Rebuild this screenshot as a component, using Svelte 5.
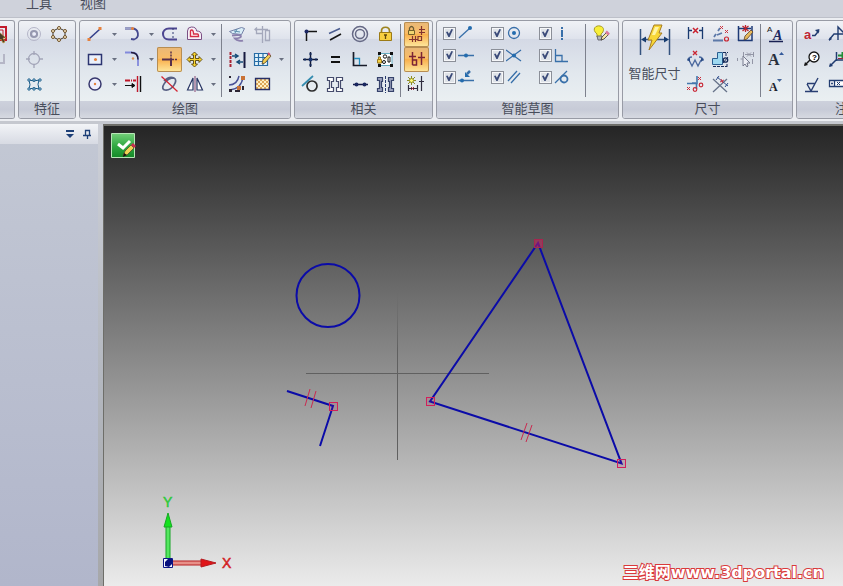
<script>
  // Sketch environment: command ribbon, docking pane and the drawing view.

  // Icon bodies, all on a 25x25 grid.
  const icons = {
    select: '<path d="M5 5H24V18H5Z" fill="none" stroke="#c11a2b" stroke-width="2"/><path d="M8 8H21V15H8Z" fill="none" stroke="#c11a2b"/><path d="M16 9v11l3-3 2 4 2-1-2-4h3z" fill="#463a26" stroke="#c9a43c" stroke-width=".6"/>',
    frame: '<path d="M8 8v8h14V7" fill="none" stroke="#b5b6c6" stroke-width="2"/>',
    ring: '<g fill="none"><circle cx="12" cy="12" r="6.500" stroke="#b4b5c8"/><circle cx="12" cy="12" r="3" stroke="#9698b0" stroke-width="2.200"/></g><circle cx="12.500" cy="12" r="1.300" fill="#eef"/>',
    hex: '<path d="M12 6l6 3v6l-6 3-6-3V9z" fill="none" stroke="#3c3328"/><g fill="#fff0cb" stroke="#6e5129"><circle cx="12" cy="6" r="1.500"/><circle cx="18" cy="9" r="1.500"/><circle cx="18" cy="15" r="1.500"/><circle cx="12" cy="18" r="1.500"/><circle cx="6" cy="15" r="1.500"/><circle cx="6" cy="9" r="1.500"/></g>',
    target: '<g fill="none" stroke="#a3a5b8" stroke-width="1.300"><circle cx="12" cy="12" r="5.500"/><path d="M4 12h4M17 12h4M12 4v4M12 17v4"/></g>',
    pattern: '<path d="M7 8q5 2 10 0q-2 4 0 9q-5-2-10 0q2-4 0-9M12 8v2M12 15v2" fill="none" stroke="#175a87"/><g fill="#d8efff" stroke="#175a87"><circle cx="7" cy="8" r="1.200"/><circle cx="12" cy="8" r="1.200"/><circle cx="18" cy="8" r="1.200"/><circle cx="7" cy="17" r="1.200"/><circle cx="12" cy="17" r="1.200"/><circle cx="18" cy="17" r="1.200"/></g>',
    line: '<path d="M6 17L17 7" stroke="#333e8a" stroke-width="1.600"/><path d="M4.500 16h3v3h-3zM15.500 5h3v3h-3z" fill="#e5813d"/>',
    rect: '<path d="M5.500 7.500h13v10h-13z" fill="#eaf0fb" stroke="#2c3470" stroke-width="1.500"/><circle cx="12.500" cy="12.500" r="1.500" fill="#e5813d"/>',
    circle: '<circle cx="12" cy="12" r="6" fill="#eef" stroke="#38386e" stroke-width="1.500"/><circle cx="12" cy="12" r="1.200" fill="#e5813d"/>',
    arc: '<path d="M5 6.500h7c7 0 8 9 2 11l-3-.500" fill="none" stroke="#45498f" stroke-width="1.800"/><path d="M5 6.500h7" stroke="#9ba1ca"/><circle cx="12.500" cy="6.500" r="1.500" fill="#e5813d"/>',
    fillet: '<path d="M5 5.500h7q6 0 6 7V19" fill="none" stroke="#8289dc" stroke-width="1.800"/><path d="M11 5.500q7 0 7 7" fill="none" stroke="#231d39" stroke-width="1.500"/><circle cx="13" cy="11.500" r="1.200" fill="#dc8d52"/>',
    trim: '<path d="M5 8.500h11" stroke="#c01628" stroke-width="2" stroke-dasharray="5 1 1 1"/><path d="M5 13.500h9M12 11.500l3 2-3 2z" stroke="#111"/><path d="M17.500 4v16" stroke="#c01628" stroke-width="1.400"/><path d="M20.500 4v16" stroke="#111" stroke-width="1.400"/>',
    slot: '<path d="M20 6.500h-8C4 6.500 4 17.500 12 17.500h8" fill="none" stroke="#4d4691" stroke-width="2"/><path d="M16 6v11" stroke="#333a73" stroke-dasharray="2 2"/>',
    cross: '<path d="M5 12.500h9V19" fill="none" stroke="#57304b" stroke-width="2"/><path d="M14 4.500v8h7" fill="none" stroke="#57304b" stroke-width="1.500" stroke-dasharray="2 1"/>',
    ellipse: '<path d="M8 18c-6-1 1-12 9-12 5 2-2 13-9 12M7 9q5-5 10-3" fill="none" stroke="#596184" stroke-width="1.700"/><path d="M4.500 4.500l16 15" stroke="#d42330" stroke-width="1.200"/>',
    offset: '<path d="M5.500 17.500V9q0-4 4-4 5 0 5 4 5 0 5 4v4.500z" fill="#f7f0f8" stroke="#7b4f84"/><path d="M8.500 14.500V9q0-1 1-1 2 0 2 4h4q1 0 1 2.500z" fill="#fff" stroke="#d52c46" stroke-width="1.400"/>',
    move: '<path d="M12.500 5l3 3h-2v3.500H17v-2l3 3-3 3v-2h-3.500V17h2l-3 3-3-3h2v-3.500H8v2l-3-3 3-3v2h3.500V8h-2z" fill="#f9d52e" stroke="#57430c" stroke-width=".9"/>',
    mirror: '<path d="M11 6v12H5.500zM15 6v12h5.500z" fill="#fff" stroke="#293664" stroke-width="1.200"/><path d="M13 4v16" stroke="#874573"/>',
    sheet: '<path d="M4.500 9.500l12-4 3 1-3 6-9-1z" fill="#d9edf7" stroke="#7482a8"/><path d="M9 9l6 1M12 7l-2 4" stroke="#5d8fae"/><path d="M7 13.500c12-2 11 3 3 3 2 2 6 3 8 2" fill="none" stroke="#8b80ad" stroke-width="1.800"/>',
    section: '<g fill="none" stroke="#a4a8bb" stroke-width="1.300"><path d="M12.500 4v17M18 7.500H6.500v4H12M15.500 8.500h4v10h-4zM7 9l-2-1.500 2-2"/></g>',
    scale: '<path d="M5.500 5v16" stroke="#a82332" stroke-width="2" stroke-dasharray="3 1"/><path d="M19.500 5v16" stroke="#171a40" stroke-width="2"/><path d="M7 9h5M10 7l3 2-3 2M18 15h-6M15 13l-3 2 3 2" fill="none" stroke="#174c78" stroke-width="1.500"/>',
    grid: '<path d="M4.500 6.500h13v12h-13zM4.500 10.500h13M4.500 14.500h13M8.500 6.500v12M13 6.500v12" fill="#e4f4fb" stroke="#286ca5" stroke-width="1.200"/><path d="M12 17l1-4 6-6 2 2-6 7z" fill="#f2cf54" stroke="#5d482a" stroke-width=".8"/><path d="M18 6l2 2" stroke="#c94b74" stroke-width="2"/>',
    curves: '<path d="M4 13c7 0 9-4 10-9M5 18c8-1 12-5 13-13" fill="none" stroke="#4a5296" stroke-width="1.500"/><path d="M16 4h4v4h-4zM12 14h4v4h-4z" fill="#c97135"/><path d="M4 4h2v2H4zM4 17h3v3H4zM10 18h5v2h-5zM17 14h2v4h-2z" fill="#2c2533"/>',
    hatch: '<path d="M5 6h15v12H5z" fill="#fff0c2"/><path d="M5 10l4-4M5 14l8-8M5 18L17 6M9 18L20 7M13 18l7-7M17 18l3-3M5 14l4 4M5 10l8 8M5 6l12 12M9 6l11 11M13 6l7 7M17 6l3 3" stroke="#d4933d" stroke-width=".8"/><path d="M5.500 6.500h14v11h-14z" fill="none" stroke="#262e66" stroke-width="1.300"/>',
    connect: '<path d="M8.500 19V9.500H19" fill="none" stroke="#151515" stroke-width="1.500"/><circle cx="8.500" cy="9.500" r="2" fill="#1d2864"/>',
    parallel: '<path d="M6 11.500l11-5" stroke="#4c5e91" stroke-width="1.500"/><path d="M7 18l11-6" stroke="#171717" stroke-width="1.600"/>',
    concentric: '<g fill="none" stroke="#666985" stroke-width="1.500"><circle cx="12" cy="12" r="7.500"/><circle cx="12" cy="12" r="4.500"/></g>',
    lock: '<path d="M8.500 11V9c0-5 8-5 8 0v2" fill="none" stroke="#9e841f" stroke-width="1.700"/><path d="M6.500 10.500h12v8h-12z" fill="#f7cf40" stroke="#9c7b16"/><path d="M11 13h3M12.500 13v4" stroke="#60470c" stroke-width="1.300"/>',
    horzvert: '<path d="M5 12.500h15M12.500 5v15" stroke="#111936" stroke-width="1.500"/><circle cx="12.500" cy="12.500" r="2" fill="#19346f"/><path d="M7 11v3M18 11v3M11 7h3M11 18h3" stroke="#19346f"/>',
    equal: '<path d="M8 10h9M8 15h9" stroke="#111" stroke-width="2"/>',
    perp: '<path d="M5.500 5v13.500H19" fill="none" stroke="#171b28" stroke-width="1.700"/><path d="M6 11.500h5.500V18" fill="none" stroke="#268ec0" stroke-width="1.300"/>',
    rigid: '<path d="M6 6.500h13v12H6z" fill="#fff" stroke="#65aac0"/><path d="M5 5h3v3H5zM17 5h3v3h-3zM5 17h3v3H5zM17 17h3v3h-3z" fill="#111"/><circle cx="12" cy="9.500" r="1.700" fill="#fff" stroke="#111"/><circle cx="11" cy="15" r="1.500" fill="#fff" stroke="#111"/><path d="M15 10h2v5h-2z" fill="none" stroke="#111"/><path d="M4.500 12.500h4v3.500h-4zM5.500 12v-2h2v2" fill="#f6d245" stroke="#9d7b20"/>',
    tangent: '<circle cx="14" cy="14" r="5" fill="none" stroke="#2d2d2d" stroke-width="1.700"/><path d="M4 14L15 4" stroke="#348caf" stroke-width="1.700"/>',
    symmetric: '<path d="M4.500 5.500h6v4h-2v6h2v4h-6v-3h2v-8h-2zM19.500 5.500h-6v4h2v6h-2v4h6v-3h-2v-8h2z" fill="#fff" stroke="#464c6c" stroke-width="1.200"/>',
    collinear: '<path d="M5 12.500h15" stroke="#151b47" stroke-width="1.300"/><circle cx="8.500" cy="12.500" r="2" fill="#1a2860"/><circle cx="16.500" cy="12.500" r="2" fill="#1a2860"/>',
    symaxis: '<path d="M4.500 5.500h5v4h-1v6h1v4h-5v-3h2v-8h-2zM20.500 5.500h-5v4h1v6h-1v4h5v-3h-2v-8h2z" fill="#9aa1bd" stroke="#35426b" stroke-width="1.200"/><path d="M12.500 4v17" stroke="#26386d" stroke-dasharray="3 1"/>',
    keep: '<path d="M4.500 8.500h6v4h-6z" fill="#f1d471" stroke="#74612a"/><path d="M5.500 8V6q2-3 4 0v2" fill="none" stroke="#6c5c34" stroke-width="1.300"/><path d="M5 17.500h9M8.500 14v6M11.500 14v6M17.500 4v9M15 7.500h6M15 10.500h6M14 18.500h3.500v-4H14z" fill="none" stroke="#84332e" stroke-width="1.200"/>',
    handles: '<path d="M8.500 5v13M5 9.500h7M8.500 13h4v5h-4M17.500 5v13M14 10.500h7" fill="none" stroke="#7b2435" stroke-width="1.500"/>',
    autodim: '<path d="M7.500 4v9M3 8.500h9M4 5l7 7M11 5l-7 7" stroke="#8d8b26"/><circle cx="7.500" cy="8.500" r="2" fill="#fff77b" stroke="#94941c"/><path d="M17.500 4v15M15 9.500h5M4.500 13v6M13.500 13v6M5 16.500h8" stroke="#302d3f" stroke-width="1.200"/><path d="M7 15l3 3M10 15l-3 3" stroke="#a22838"/>',
    bulb: '<path d="M8 12c-6-5-1-9 3-8 5 1 4 6 1 8v3H8z" fill="#f8ef38" stroke="#a99d27"/><path d="M8 14h5v4H9z" fill="#b7b8bd" stroke="#55565d" stroke-width=".8"/><path d="M12 18l1-3 5-5 2 2-5 5z" fill="#f8e7a4" stroke="#3b3431" stroke-width=".8"/><path d="M17 9.500l3 3" stroke="#da789c" stroke-width="2.500"/>',
    dist: '<path d="M5.500 5v12M19.500 5v12M6 8.500h3M16 8.500h3" stroke="#193a70" stroke-width="1.300"/><path d="M10 6l5 5M15 6l-5 5" stroke="#ca202e" stroke-width="1.500"/>',
    angdim: '<path d="M5 18.500h10M6 15l2-3M10 9l2-3M9 13l5-2" fill="none" stroke="#5c78a8" stroke-width="1.800"/><path d="M12 4l3 3M15 4l-3 3M17 8l3 3M20 8l-3 3" stroke="#cb3440"/><circle cx="18.500" cy="17" r="2" fill="none" stroke="#cb2531" stroke-width="1.200"/>',
    dimedit: '<path d="M5.500 4v15M5 18.500h14V4M6 6.500h12" fill="none" stroke="#1d3976" stroke-width="1.500"/><path d="M9.500 4l6 5M15.500 4l-6 5M12.500 3v7" stroke="#bd2630" stroke-width="1.300"/><path d="M11 18l1-4 6-6 2 2-6 7z" fill="#e7b95c" stroke="#59402c" stroke-width=".8"/>',
    angle: '<path d="M10 4l4 4M14 4l-4 4" stroke="#cb2531" stroke-width="1.300"/><path d="M6 13l3 6 3-6 3 6 3-6M5 14q0-4 4-4M20 14q0-4-4-4" fill="none" stroke="#4f6ca0" stroke-width="1.400"/><path d="M4 12l3 3v-4zM21 12l-3 3v-4z" fill="#284a84"/>',
    coord: '<path d="M4.500 11.500h5v-6h5v12h-10z" fill="#9ed9f1" stroke="#2a5e91"/><path d="M15 5.500h5M18 6v4M5 19.500h14M19 17v3" stroke="#162b58" stroke-dasharray="3 1"/><circle cx="17.500" cy="13" r="2.200" fill="none" stroke="#162b58" stroke-width="1.300"/><path d="M15 16l5-6" stroke="#162b58"/>',
    pickdim: '<path d="M4.500 11v3M7.500 12h2M10.500 5v5M20.500 5v5M12 7.500h8M19.500 12v5M14 5.500l4 4M18 5.500l-4 4" stroke="#9396a6"/><path d="M10 9v10l2-2 2 3 1-1-1-3h3z" fill="#eceef5" stroke="#777b8e"/>',
    ordinate: '<path d="M4 11.500h10V4M13.500 12v5M9 11h4" fill="none" stroke="#4377ad" stroke-width="1.600"/><path d="M15 5l3 3M18 5l-3 3M4 15l3 3M7 15l-3 3" stroke="#ca2a38"/><circle cx="18" cy="13" r="1.800" fill="none" stroke="#ca2a38" stroke-width="1.200"/><circle cx="12" cy="17.500" r="1.800" fill="none" stroke="#ca2a38" stroke-width="1.200"/>',
    crossdim: '<path d="M5 20L19 7M5 7l14 13" stroke="#68748a" stroke-width="1.300"/><path d="M9 5l11 9M11 4l-3 4M20 11l-3 4" stroke="#32508d"/><path d="M13 7l2 4M16 8l-4 2" stroke="#ca3141"/>',
    textstyle: '<text x="3" y="10" font-size="8" font-family="Liberation Sans" fill="#111">A</text><text x="9" y="18" font-size="14" font-style="italic" font-weight="bold" font-family="Liberation Serif" fill="#1b2760">A</text><path d="M5 19.500h14" stroke="#182052" stroke-width="1.500"/>',
    bigger: '<text x="4" y="18" font-size="16" font-weight="bold" font-family="Liberation Serif" fill="#28303d">A</text><path d="M15 8l2.500-3L20 8z" fill="#345a9b"/>',
    smaller: '<text x="5" y="19" font-size="12" font-weight="bold" font-family="Liberation Serif" fill="#1a2029">A</text><path d="M13 7h5l-2.500 3z" fill="#426499"/>',
    leader: '<text x="4" y="17" font-size="13" font-weight="bold" font-family="Liberation Sans" fill="#bf2635">a</text><path d="M12 13.500h3l4-5" fill="none" stroke="#213c70" stroke-width="1.500"/><path d="M15 8l4.500-1-1 4.500z" fill="#213c70"/>',
    weld: '<path d="M4 18l5-6h14M13 18V5l8 8" fill="none" stroke="#213c70" stroke-width="1.400"/><path d="M4 19l1-4 2 2z" fill="#213c70"/>',
    balloon: '<path d="M5 18l5-5" stroke="#151515" stroke-width="1.500"/><path d="M4 19l1-4 3 3z" fill="#151515"/><circle cx="14" cy="10" r="5" fill="#fff" stroke="#151515" stroke-width="1.300"/><text x="12" y="13" font-size="8" font-weight="bold" font-family="Liberation Sans">?</text>',
    callout: '<path d="M5 19l6-6h14M11.500 5v9" stroke="#213c70" fill="none" stroke-width="1.500"/><path d="M4 20l1-4 3 3z" fill="#213c70"/><path d="M13 8.500h12M17.500 5v7" stroke="#218c37" stroke-width="2"/><path d="M13 11.500h12" stroke="#98293d"/>',
    finish: '<path d="M5 19.500h13M7 11.500h8M7 12l4 7 7-13" fill="none" stroke="#283e72" stroke-width="1.400"/>',
    fcf: '<path d="M4.500 8.500h20v6h-20zM9.500 8v6" fill="#fff" stroke="#213c70" stroke-width="1.300"/><path d="M12 10l3 3M15 10l-3 3M18 10l3 3M21 10l-3 3" stroke="#213c70"/><circle cx="7" cy="11.500" r="1" fill="#213c70"/>',
  };

  // Each column is read top to bottom; null leaves a row free.
  const A = 'arrow';
  const groups = [
    { name: '', kind: 'cut', cols: [['select', 'frame', null]] },
    { name: '特征', cols: [['ring', 'target', 'pattern'], ['hex', null, null]] },
    { name: '绘图', cols: [
      ['line', 'rect', 'circle'], [A, A, A],
      ['arc', 'fillet', 'trim'], [A, A, null],
      ['slot', 'cross', 'ellipse'], ['offset', 'move', 'mirror'], [A, A, A],
      'sep', ['sheet', 'scale', 'curves'], ['section', 'grid', 'hatch'], [null, A, null],
    ] },
    { name: '相关', cols: [
      ['connect', 'horzvert', 'tangent'], ['parallel', 'equal', 'symmetric'],
      ['concentric', 'perp', 'collinear'], ['lock', 'rigid', 'symaxis'],
      'sep', ['keep', 'handles', 'autodim'],
    ] },
    { name: '智能草图', kind: 'snap', cols: ['sep', ['bulb', null, null]] },
    { name: '尺寸', kind: 'dim', cols: [
      ['dist', 'angle', 'ordinate'], ['angdim', 'coord', 'crossdim'], ['dimedit', 'pickdim', null],
      'sep', ['textstyle', 'bigger', 'smaller'],
    ] },
    { name: '注释', kind: 'notes', cols: [['leader', 'balloon', 'finish'], ['weld', 'callout', 'fcf']] },
  ];
  let active = $state({ cross: true, keep: true, handles: true });

  // 18x18 icons next to the tick boxes
  let snaps = $state([
    { id: 'endpoint', on: true, art: '<path d="M1 14L12 4"/><circle cx="12" cy="4" r="2" fill="#246cae" stroke="none"/>' },
    { id: 'center', on: true, art: '<circle cx="8" cy="9" r="5.500"/><circle cx="8" cy="9" r="2" fill="#246cae" stroke="none"/>' },
    { id: 'extension', on: true, art: '<path d="M8 3v2M8 6v7M8 14v2" stroke-width="2"/>' },
    { id: 'midpoint', on: true, art: '<path d="M0 9.500h16"/><circle cx="8" cy="9.500" r="2" fill="#246cae" stroke="none"/>' },
    { id: 'intersection', on: true, art: '<path d="M0 4l15 11M0 15L15 4"/><circle cx="8" cy="9.500" r="2" fill="#246cae" stroke="none"/>' },
    { id: 'perpendicular', on: true, art: '<path d="M1.500 3v12.500H14M2 9.500h6v6"/>' },
    { id: 'point-on', on: true, art: '<path d="M0 12.500h16"/><path d="M12 3l-3 3" stroke-width="2.500"/><path d="M7 4v5h5z" fill="#246cae" stroke="none"/><circle cx="4" cy="12.500" r="2" fill="#246cae" stroke="none"/>' },
    { id: 'parallel', on: true, art: '<path d="M2 13L11 3M5 15L14 5"/>' },
    { id: 'tangent', on: true, art: '<circle cx="10" cy="11" r="3.500" stroke-width="1.800"/><path d="M1 15L13 3"/>' },
  ]);

  const nodes = [[333, 406], [538, 243], [430, 401], [621, 463]];
</script>

<div class="app">
  <nav class="tabs">
    <button>工具</button>
    <button>视图</button>
  </nav>

  <header class="ribbon">
    {#each groups as g}
      <section class="group {g.kind ?? ''}" aria-label={g.name}>
        <div class="tools">
          {#if g.kind === 'snap'}
            <div class="snaps">
              {#each snaps as s}
                <label>
                  <input type="checkbox" bind:checked={s.on} aria-label={s.id} />
                  <svg width="18" height="18" fill="none" stroke="#386fa9" stroke-width="1.3">{@html s.art}</svg>
                </label>
              {/each}
            </div>
          {/if}
          {#if g.kind === 'dim'}
            <button class="smart">
              <svg width="36" height="36">
                <path d="M3.500 6v26M32.500 6v26M6 16.500h24" stroke="#34527e" stroke-width="1.500" />
                <path d="M4 16.500l5-3v6zM32 16.500l-5-3v6z" fill="#173c70" />
                <path d="M17 2h8l-3 8h3L12 27l3-10h-4z" fill="#f8d738" stroke="#a77d22" />
                <path d="M18 4h4l-4 8h-3z" fill="#fff5a6" />
              </svg>
              <span>智能尺寸</span>
            </button>
          {/if}
          {#each g.cols as col}
            {#if col === 'sep'}
              <span class="sep"></span>
            {:else}
              <div class="col">
                {#each col as name}
                  {#if name === A}
                    <button class="drop" aria-label="more"><svg width="5" height="3"><path d="M0 0h5L2.500 3z" fill="#696f80" /></svg></button>
                  {:else if name}
                    <button class="tool" class:active={active[name]} aria-label={name} onclick={() => (active[name] = !active[name])}>
                      <svg width="25" height="25">{@html icons[name]}</svg>
                    </button>
                  {:else}
                    <span></span>
                  {/if}
                {/each}
              </div>
            {/if}
          {/each}
        </div>
        <div class="caption">{g.name}</div>
      </section>
    {/each}
  </header>

  <main>
    <aside>
      <div class="panebar">
        <button aria-label="menu"><svg width="10" height="10"><path d="M1 1h8v2H1zM1 5h8L5 9z" fill="#1d3f77" /></svg></button>
        <button aria-label="pin"><svg width="10" height="10"><path d="M3.500 6V1.500h4V6M1 6.500h8M5.500 7v3" fill="none" stroke="#1d3f77" stroke-width="1.3" /></svg></button>
      </div>
    </aside>
    <div class="splitter"></div>

    <div class="view">
      <!-- sketch is kept in window coordinates -->
      <svg class="sketch" width="100%" height="100%">
        <defs>
          <linearGradient id="fade" gradientUnits="userSpaceOnUse" x1="0" y1="290" x2="0" y2="350">
            <stop offset="0" stop-color="#606060" stop-opacity="0" />
            <stop offset="1" stop-color="#606060" />
          </linearGradient>
        </defs>
        <g transform="translate(-104 -126)" fill="none">
          <path d="M306 373.500H489" stroke="#606060" />
          <path d="M397 290h1v170h-1z" fill="url(#fade)" />
          <g stroke="#0b0ba8" stroke-width="2">
            <circle cx="328" cy="295.500" r="31.500" />
            <path d="M287 391l46 15-13 40" />
            <path d="M538 243L430 401.500 621.500 463.500z" />
          </g>
          <path d="M310 389l-5 17M316 391l-5 17M527 423l-6 17M532 425l-6 17" stroke="#c92a50" />
          {#each nodes as [x, y], i}
            <rect x={x - 3.5} y={y - 3.5} width="8" height="8" stroke={i === 1 ? '#a8244f' : '#d21f5b'} fill="#d21f5b" fill-opacity={i === 1 ? 0.5 : 0.1} />
          {/each}
        </g>
      </svg>

      <button class="finish" aria-label="finish sketch">
        <svg width="28" height="26">
          <defs>
            <linearGradient id="ok" x2="0" y2="1">
              <stop offset="0" stop-color="#73cf79" />
              <stop offset=".5" stop-color="#32aa43" />
              <stop offset="1" stop-color="#148a28" />
            </linearGradient>
          </defs>
          <path d="M.5.500h23v24H.500z" fill="url(#ok)" stroke="#b8e6b7" />
          <path d="M7 11l5 4 7-7" fill="none" stroke="#fff" stroke-width="3" />
          <path d="M12 23l2-5 6-6 3 3-7 7z" fill="#efd353" stroke="#57472c" stroke-width=".8" />
          <path d="M12 24l1-4 3 2z" fill="#16130d" />
          <path d="M20 12l2-2 3 3-2 2z" fill="#c72d50" />
        </svg>
      </button>

      <svg class="triad" width="90" height="80">
        <path d="M22 70V30h4v40" fill="#54e75f" stroke="#17a526" />
        <path d="M24 20l4 14h-8z" fill="#13e21d" stroke="#16a824" />
        <path d="M27 68h33v4H27z" fill="#e78f88" stroke="#b51c20" />
        <path d="M72 70l-15 4v-8z" fill="#e01518" stroke="#b51c20" />
        <path d="M19.500 65.500h9v9h-9z" fill="#f4f6ff" stroke="#0c1486" />
        <path d="M21 73v-4l3-3h4v5l-3 3z" fill="#07107e" />
        <text x="19" y="14" fill="#2fc93a" stroke="#2fc93a">Y</text>
        <text x="78" y="75" fill="#d32124" stroke="#d32124">X</text>
      </svg>
      <div class="mark">三维网www.3dportal.cn</div>
    </div>
  </main>
</div>

<style>
  :global(body) { background: #ccd0d9; }

  .app {
    display: flex; flex-direction: column; height: 100vh; overflow: hidden;
    font: 13px/16px "Liberation Sans", "Noto Sans CJK SC", sans-serif; color: #484d5b;
  }
  button { padding: 0; border: 0; background: none; font: inherit; color: inherit; }
  svg { display: block; }

  .tabs {
    display: flex; align-items: flex-end; flex: none; height: 17px; gap: 28px;
    padding: 0 26px; overflow: hidden;
    background: #cfd2db; border-bottom: 1px solid #bdc0c9;
  }
  .tabs button { padding-bottom: 5px; }

  .ribbon {
    display: flex; flex: none; gap: 3px; padding: 2px 0 2px; overflow: hidden;
    background: #eceef2; border-bottom: 3px solid #c5c8cf;
  }
  .group {
    flex: none; box-sizing: border-box; overflow: hidden;
    border: 1px solid #989ba5; border-radius: 3px;
    background: linear-gradient(#f0f2f6, #dfe3ec 18%, #d4d9e5 19%, #e2e8ee 55%, #eff4f4);
  }
  .tools { display: flex; height: 80px; box-sizing: border-box; padding: 1px 3px 0; }
  .caption {
    height: 17px; text-align: center; line-height: 16px;
    background: linear-gradient(#cdd1dc, #c7cbd7 50%, #d6d9e1);
  }
  .cut { width: 15px; border-left: 0; border-radius: 0 3px 3px 0; }
  .cut .tools { justify-content: flex-end; padding-right: 7px; }
  .snap .tools { padding-right: 4px; }
  .notes { width: 104px; }

  .col { display: grid; grid-template-rows: repeat(3, 25px); }
  .tool { width: 25px; height: 25px; }
  .tool.active {
    border-radius: 2px; box-shadow: inset 0 0 0 1px #b78d52;
    background: linear-gradient(#e9b878, #f9bd67 45%, #f9b04d 50%, #fee9a0);
  }
  .drop { display: grid; place-items: center; width: 12px; height: 25px; }
  .sep { width: 1px; height: 73px; margin: 2px 3px 0 2px; background: #7d818d; }

  .snaps { display: grid; grid-template: repeat(3, 22px) / repeat(3, 44px); column-gap: 4px; padding-left: 3px; }
  .snaps label { display: flex; align-items: center; gap: 2px; }
  input {
    appearance: none; box-sizing: border-box; flex: none; width: 13px; height: 13px; margin: 0;
    display: grid; place-items: center;
    border: 1px solid #8b8f98; background: #dfe3e8; box-shadow: inset 0 0 0 1px #f6f7f9;
  }
  input:checked::after {
    content: ""; width: 7px; height: 8px; background: #3b4b79;
    clip-path: polygon(0 38%, 22% 30%, 42% 58%, 78% 0, 100% 6%, 52% 100%, 34% 100%);
  }

  .smart { display: flex; flex-direction: column; align-items: center; gap: 7px; width: 57px; padding-top: 1px; }
  .smart span { white-space: nowrap; }

  main { display: flex; flex: 1; min-height: 0; }
  aside { flex: none; width: 98px; background: linear-gradient(#c3c8d4, #b1b6cb); }
  .splitter { flex: none; width: 5px; background: linear-gradient(#cdd0d8, #b4b8c0 55%, #a6a7a9); }
  .panebar {
    display: flex; align-items: center; justify-content: flex-end; gap: 7px;
    height: 20px; padding-right: 6px; background: linear-gradient(#f2f4f7, #d7dae3);
  }

  .view {
    position: relative; flex: 1; overflow: hidden;
    border: solid #6e6e69; border-width: 2px 0 0 1px;
    background: linear-gradient(#252525, #ebebeb);
  }
  .sketch { position: absolute; inset: 0; }
  .finish { position: absolute; left: 7px; top: 7px; }
  .triad { position: absolute; left: 40px; bottom: 13px; font: 14px "Liberation Sans", sans-serif; stroke-width: .5; }
  .triad path { stroke-width: 1; }
  .mark {
    position: absolute; right: 19px; bottom: 2px; white-space: nowrap;
    font: bold 16px/22px "DejaVu Sans", "Noto Sans CJK SC", sans-serif; color: #fff;
    -webkit-text-stroke: 2px #d9393b; paint-order: stroke fill;
  }
</style>
